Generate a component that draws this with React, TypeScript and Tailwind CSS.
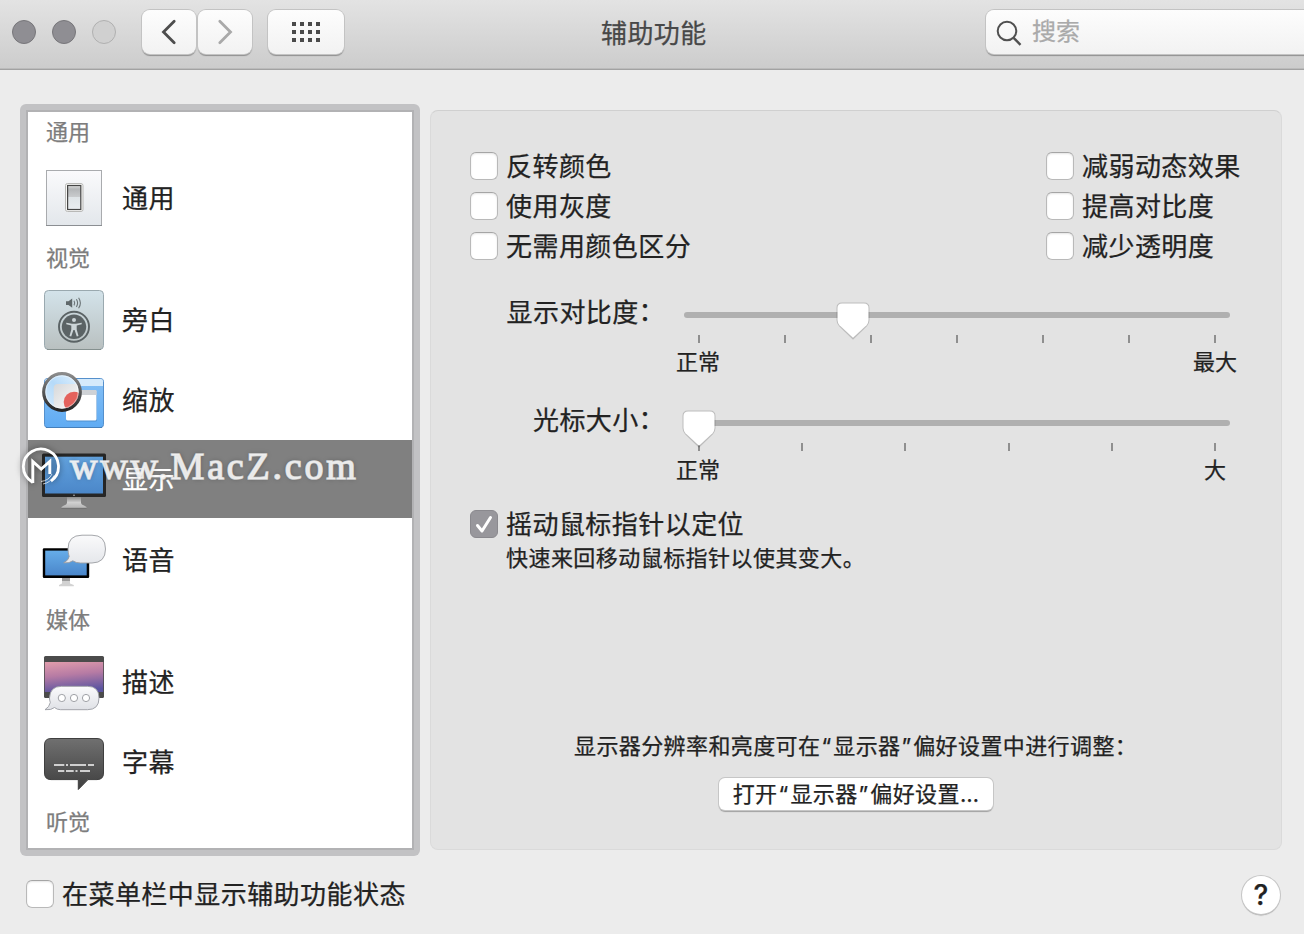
import type { ReactNode } from "react";

const toolbarButton =
  "flex h-[44px] items-center justify-center rounded-[8px] bg-linear-to-b from-[#fdfdfd] to-[#f2f2f2] shadow-[0_0_0_1px_#c3c3c3,0_1.5px_1px_#8f8f8f]";

function GeneralIcon() {
  return (
    <svg width="64" height="64" viewBox="0 0 64 64">
      <defs>
        <linearGradient id="plate" x1="0" y1="0" x2="0" y2="1">
          <stop offset="0" stopColor="#fafafc" />
          <stop offset="1" stopColor="#e3e7eb" />
        </linearGradient>
        <linearGradient id="rocker" x1="0" y1="0" x2="0" y2="1">
          <stop offset="0" stopColor="#dcdcdc" />
          <stop offset="0.15" stopColor="#b4b6b8" />
          <stop offset="0.46" stopColor="#c8cacc" />
          <stop offset="0.5" stopColor="#dfe4e7" />
          <stop offset="1" stopColor="#e9edf0" />
        </linearGradient>
      </defs>
      <rect x="4.5" y="4.5" width="55" height="55" fill="url(#plate)" stroke="#a9abae" />
      <path d="M4 59.5h56" stroke="#8b8e92" />
      <rect x="23.5" y="17.5" width="17.5" height="28" rx="2" fill="#f7f7f5" stroke="#b9b9b7" />
      <rect x="25.6" y="19.5" width="13.2" height="24" fill="url(#rocker)" stroke="#454545" strokeWidth="1.2" />
    </svg>
  );
}

function VoiceOverIcon() {
  return (
    <svg width="64" height="64" viewBox="0 0 64 64">
      <defs>
        <linearGradient id="voice" x1="0" y1="0" x2="0" y2="1">
          <stop offset="0" stopColor="#d3e3ea" />
          <stop offset="1" stopColor="#b9c0c0" />
        </linearGradient>
      </defs>
      <rect x="2.5" y="2.5" width="59" height="59" rx="4" fill="url(#voice)" stroke="#9aa9af" />
      <path d="M5 61.5h54" stroke="#85908f" />
      <path d="M24 13.3h2.5l3.7-2.8v9.2l-3.7-2.8H24z" fill="#5f686a" />
      <g fill="none" stroke="#6a7375" strokeWidth="1.1">
        <path d="M32 12.8q1.4 2.3 0 4.6M34.4 11.3q2.4 3.8 0 7.6M36.6 9.7q3.6 5.3 0 10.6" />
      </g>
      <circle cx="32" cy="38.8" r="15" fill="none" stroke="#5b6365" strokeWidth="1.9" />
      <circle cx="32" cy="38.8" r="12.2" fill="#5b6365" />
      <circle cx="32" cy="32" r="2" fill="#ccd5d8" />
      <path
        d="M24.3 34.7l5.7 1h4l5.7-1v1.6l-5 1.2v4l1.8 6.6-1.7.5-2.2-6.5h-1.2l-2.2 6.5-1.7-.5 1.8-6.6v-4l-5-1.2z"
        fill="#ccd5d8"
      />
    </svg>
  );
}

function ZoomIcon() {
  return (
    <svg width="64" height="64" viewBox="0 0 64 64">
      <defs>
        <linearGradient id="zoomBody" x1="0" y1="0" x2="0" y2="1">
          <stop offset="0" stopColor="#86c0f5" />
          <stop offset="1" stopColor="#5fabf3" />
        </linearGradient>
        <linearGradient id="lensRim" x1="0" y1="0" x2="0" y2="1">
          <stop offset="0" stopColor="#8b8b8b" />
          <stop offset="1" stopColor="#262626" />
        </linearGradient>
        <linearGradient id="lensGlass" x1="1" y1="0" x2="0" y2="1">
          <stop offset="0" stopColor="#e3f2fd" />
          <stop offset="0.5" stopColor="#b5daf9" />
          <stop offset="1" stopColor="#d8ecfc" />
        </linearGradient>
        <linearGradient id="lensWindow" x1="0" y1="0" x2="1" y2="1">
          <stop offset="0" stopColor="#d6d8da" />
          <stop offset="0.6" stopColor="#f5f5f5" />
        </linearGradient>
        <clipPath id="lensClip">
          <circle cx="20" cy="23.8" r="17" />
        </clipPath>
      </defs>
      <rect x="2.5" y="10.5" width="59" height="49" rx="3" fill="url(#zoomBody)" stroke="#5590cc" />
      <path d="M3 18V13q0-2 2-2h54q2 0 2 2v5z" fill="#d5eafb" />
      <path d="M4 59.5h56" stroke="#447fbb" />
      <rect x="24" y="22.5" width="31" height="31" rx="1.5" fill="#4c8fd0" />
      <rect x="24" y="22" width="30.5" height="30.5" rx="1.5" fill="#fff" />
      <path d="M24 27v-4q0-1 1-1h28.5q1 0 1 1v4z" fill="#cfd2d6" />
      <circle cx="20" cy="23.8" r="17.5" fill="url(#lensGlass)" />
      <g clipPath="url(#lensClip)">
        <rect x="11.7" y="16" width="34" height="34" rx="4" fill="url(#lensWindow)" />
        <circle cx="32" cy="34" r="10.3" fill="#e4625c" />
      </g>
      <circle cx="20" cy="24" r="18.3" fill="none" stroke="url(#lensRim)" strokeWidth="3.2" />
      <circle cx="20" cy="24" r="16.3" fill="none" stroke="#fff" strokeOpacity="0.6" strokeWidth="0.8" />
    </svg>
  );
}

function DisplayIcon() {
  return (
    <svg width="64" height="64" viewBox="0 0 64 64">
      <defs>
        <linearGradient id="screen" x1="0" y1="0" x2="0" y2="1">
          <stop offset="0" stopColor="#62a2de" />
          <stop offset="1" stopColor="#4b87c9" />
        </linearGradient>
        <linearGradient id="stand" x1="0" y1="0" x2="0" y2="1">
          <stop offset="0" stopColor="#8e8e8e" />
          <stop offset="0.5" stopColor="#d0d0d0" />
          <stop offset="1" stopColor="#b5b5b5" />
        </linearGradient>
      </defs>
      <path d="M25 49h14v6q0 1.5 3.5 2.8l2 1.2v1H19.5v-1l2-1.2q3.5-1.3 3.5-2.8z" fill="url(#stand)" />
      <path d="M19.5 60.3h25" stroke="#6b6b6b" strokeWidth="0.8" />
      <rect x="0" y="5.5" width="64" height="43.5" rx="1.5" fill="#262626" />
      <rect x="3" y="8.7" width="58" height="36.8" fill="url(#screen)" />
      <circle cx="32" cy="47.2" r="0.8" fill="#bbb" />
    </svg>
  );
}

function SpeechIcon() {
  return (
    <svg width="64" height="64" viewBox="0 0 64 64">
      <defs>
        <linearGradient id="speechScreen" x1="0" y1="0" x2="0" y2="1">
          <stop offset="0" stopColor="#66ade9" />
          <stop offset="1" stopColor="#4a86ca" />
        </linearGradient>
        <linearGradient id="bubble" x1="0" y1="0" x2="0" y2="1">
          <stop offset="0" stopColor="#fafafb" />
          <stop offset="1" stopColor="#e5e7eb" />
        </linearGradient>
      </defs>
      <path d="M20 50h8v5.5l3.8 1.5v1.2H17V57l3-1.5z" fill="#d2d2d2" />
      <path d="M20 50h8v3h-8z" fill="#9c9c9c" />
      <rect x="0.8" y="20.2" width="46.4" height="29.8" rx="1.2" fill="#000" />
      <rect x="3.2" y="22.6" width="41.5" height="24.8" fill="url(#speechScreen)" />
      <path
        d="M21.7 34.8Q26.5 32.5 27.2 28.5Q26 25 26 21Q26 7.2 40 7.2H50Q63.5 7.2 63.5 21T50 35H38.5Q34 35 30.8 32.8Q27.5 35.5 21.7 34.8z"
        fill="url(#bubble)"
        stroke="#9b9da2"
        strokeWidth="0.9"
      />
    </svg>
  );
}

function DescriptionIcon() {
  return (
    <svg width="64" height="64" viewBox="0 0 64 64">
      <defs>
        <linearGradient id="sky" x1="0.2" y1="0" x2="0.4" y2="1">
          <stop offset="0" stopColor="#de9aab" />
          <stop offset="0.45" stopColor="#b67ba4" />
          <stop offset="1" stopColor="#5b54a0" />
        </linearGradient>
        <linearGradient id="descBubble" x1="0" y1="0" x2="0" y2="1">
          <stop offset="0" stopColor="#fbfbfc" />
          <stop offset="1" stopColor="#dfe1e6" />
        </linearGradient>
      </defs>
      <rect x="2" y="6" width="60" height="42" rx="1.5" fill="#4b4b4b" />
      <rect x="2.8" y="12" width="58.4" height="30" fill="url(#sky)" />
      <path
        d="M3 59.7Q7.5 57 8.3 52.5Q7.5 50 7.5 48Q8 36.3 19.5 36.3H45.5Q57 36.3 57 48T45.5 59.7H18.5Q15 59.7 12.5 57.5Q9.5 60.3 3 59.7z"
        fill="url(#descBubble)"
        stroke="#9a9ca3"
        strokeWidth="0.9"
      />
      <g fill="#fff" stroke="#9fa1a6">
        <circle cx="19.8" cy="48" r="3.6" />
        <circle cx="32" cy="48" r="3.6" />
        <circle cx="44" cy="48" r="3.6" />
      </g>
    </svg>
  );
}

function CaptionIcon() {
  return (
    <svg width="64" height="64" viewBox="0 0 64 64">
      <defs>
        <linearGradient id="caption" x1="0" y1="0" x2="0" y2="1">
          <stop offset="0" stopColor="#707070" />
          <stop offset="1" stopColor="#3f3f3f" />
        </linearGradient>
      </defs>
      <path
        d="M9 8.5H55Q61.5 8.5 61.5 15V43Q61.5 49.6 55 49.6H46L36.3 59.5V49.6H9Q2.5 49.6 2.5 43V15Q2.5 8.5 9 8.5z"
        fill="url(#caption)"
        stroke="#3f3f3f"
      />
      <path d="M12 35h10.3M24 35h2M28 35h16M46 35h6M16 41h6.3M24 41h7.7M33.5 41h2M38 41h10" stroke="#cfcfcf" strokeWidth="1.9" />
    </svg>
  );
}

function SidebarHeader({ children, first = false }: { children: ReactNode; first?: boolean }) {
  return (
    <div
      className={`flex items-center pl-[18px] text-[22px] leading-[30px] text-[#7d7d7d] ${
        first ? "h-[46px] pb-[6px]" : "h-[42px] pb-[2px]"
      }`}
    >
      {children}
    </div>
  );
}

function SidebarItem({ icon, label, selected = false }: { icon: ReactNode; label: string; selected?: boolean }) {
  return (
    <div
      className={`flex h-[80px] items-center gap-4 border-b-2 border-white pt-[2px] pl-[14px] text-[26px] leading-[36px] tracking-[0.4px] ${
        selected ? "bg-[#808080] text-white" : "text-[#222]"
      }`}
    >
      {icon}
      <span className={selected ? "" : "pt-px"}>{label}</span>
    </div>
  );
}

function Checkbox({ label, checked = false }: { label: string; checked?: boolean }) {
  return (
    <label className="flex h-[28px] items-center gap-2 text-[26px] leading-[28px] tracking-[0.45px] whitespace-nowrap text-[#222]">
      {checked ? (
        <span className="size-[28px] shrink-0 rounded-[6px] border border-[#8a898e] bg-[#98979c]">
          <svg width="26" height="26" viewBox="0 0 26 26" fill="none">
            <path d="M6.5 14.5l4.5 5.5L19.5 6.5" stroke="#fff" strokeWidth="3" strokeLinecap="round" strokeLinejoin="round" />
          </svg>
        </span>
      ) : (
        <span className="size-[28px] shrink-0 rounded-[6px] border border-[#b9b9b9] border-t-[#a5a5a5] bg-white shadow-[inset_0_1px_2px_#e4e4e4]" />
      )}
      <span className="pt-[2px]">{label}</span>
    </label>
  );
}

interface SliderProps {
  label: string;
  ticks: number;
  value: number;
  min: string;
  max: string;
}

function Slider({ label, ticks, value, min, max }: SliderProps) {
  return (
    <div className="flex h-[108px] text-[#222]">
      <div className="flex w-[194px] justify-end pt-[8px] text-[26px] leading-[36px] tracking-[0.4px]">
        <span>{label}</span>
        <span className="-mt-[1px]">：</span>
      </div>
      <div className="ml-[12px] w-[560px]">
        <div className="relative ml-[7px] h-[27px] w-[546px] pt-[25px]">
          <div className="h-[6px] rounded-full bg-[#b0b0b0]" />
          <svg
            className="absolute top-[14px] z-10 -ml-[18px]"
            style={{ left: value }}
            width="36"
            height="40"
            viewBox="0 0 36 40"
          >
            <path
              d="M7 2.5H29Q33.5 2.5 33.5 7V19Q33.5 22 31.5 24.2L18 37.3L4.5 24.2Q2.5 22 2.5 19V7Q2.5 2.5 7 2.5z"
              fill="none"
              stroke="#000"
              strokeOpacity="0.17"
              strokeWidth="2"
            />
            <path
              d="M7 2.5H29Q33.5 2.5 33.5 7V19Q33.5 22 31.5 24.2L18 36.8L4.5 24.2Q2.5 22 2.5 19V7Q2.5 2.5 7 2.5z"
              fill="#fff"
            />
          </svg>
        </div>
        <div className="mx-[21px] mt-[21px] flex justify-between">
          {Array.from({ length: ticks }, (_, i) => (
            <span key={i} className="h-[8px] w-[2px] bg-[#8f8f8f]" />
          ))}
        </div>
        <div className="mt-[4px] flex justify-between text-[22px] leading-[30px]">
          <span className="-ml-[1px] w-[44px] text-center whitespace-nowrap">{min}</span>
          <span className="w-[44px] text-center whitespace-nowrap">{max}</span>
        </div>
      </div>
    </div>
  );
}

function Quoted({ children }: { children: string }) {
  return (
    <>
      <span className="pl-[1px] tracking-[2.2px]">“</span>
      {children}
      <span className="pl-[1px] tracking-[2px]">”</span>
    </>
  );
}

function Watermark() {
  return (
    <div className="absolute top-[445px] left-[20px] z-20 flex items-start">
      <svg className="drop-shadow-[0_0_3px_rgba(0,0,0,0.5)]" width="42" height="44" viewBox="0 0 42 44" fill="none" stroke="#fff">
        <path d="M12.8 37.5Q3.3 31.5 3.3 21.5A17.6 17.6 0 1 1 31 36" strokeWidth="2.8" />
        <path d="M12.8 38V16.5l8.4 7.5 8.6-7.5V29" strokeWidth="2.9" />
        <path d="M21 36.5q8-1 11-7.5M23 39q8-1.5 11-8.5" strokeWidth="0.9" strokeOpacity="0.8" />
      </svg>
      <span className="-mt-[1px] ml-[8px] font-['Liberation_Serif'] text-[38px] leading-[44px] tracking-[2.8px] text-white/85 [-webkit-text-stroke:1.5px_rgba(240,240,240,0.8)] [text-shadow:0_0_5px_rgba(0,0,0,0.35)]">
        www.MacZ.com
      </span>
    </div>
  );
}

export default function App() {
  return (
    <div className="relative flex h-[934px] w-[1304px] flex-col overflow-hidden bg-[#ececec] font-[Inter,'Noto_Sans_CJK_SC',sans-serif] [-webkit-text-stroke:0.25px]">
      <header className="grid h-[70px] shrink-0 grid-cols-[601px_385px_318px] border-b border-[#a2a2a2] bg-linear-to-b from-[#e3e3e3] to-[#cccccc] pt-[10px] shadow-[inset_0_-1px_0_#bbb]">
        <div className="flex">
          <div className="flex h-[44px] items-center gap-4 pl-[12px]">
            <span className="size-[24px] rounded-full border border-[#77767a] bg-[#8f8e93]" />
            <span className="size-[24px] rounded-full border border-[#77767a] bg-[#8f8e93]" />
            <span className="size-[24px] rounded-full border border-[#b0b0b0] bg-[#d0d0d0]" />
          </div>
          <button className={`ml-[26px] w-[54px] ${toolbarButton}`}>
            <svg width="54" height="44" viewBox="0 0 54 44" fill="none">
              <path d="M32.2 11.2L21.5 22l10.7 10.8" stroke="#4d4d4d" strokeWidth="2.8" strokeLinecap="round" />
            </svg>
          </button>
          <button className={`ml-[2px] w-[54px] ${toolbarButton}`}>
            <svg width="54" height="44" viewBox="0 0 54 44" fill="none">
              <path d="M21.8 11.2L32.5 22 21.8 32.8" stroke="#a9a9a9" strokeWidth="2.8" strokeLinecap="round" />
            </svg>
          </button>
          <button className={`ml-[16px] w-[76px] ${toolbarButton}`}>
            <span className="grid grid-cols-4 gap-[4px]">
              {Array.from({ length: 12 }, (_, i) => (
                <span key={i} className="size-[4px] bg-[#4a4a4a]" />
              ))}
            </span>
          </button>
        </div>
        <h1 className="pt-[2px] text-[26px] leading-[44px] tracking-[0.4px] text-[#484848]">辅助功能</h1>
        <div className="flex h-[44px] w-[330px] items-center gap-[10px] rounded-[8px] bg-linear-to-b from-[#fdfdfd] to-[#f2f2f2] pl-[10px] text-[24px] text-[#aaa] shadow-[0_0_0_1px_#c3c3c3,0_1.5px_1px_#8f8f8f]">
          <svg className="mt-[2px]" width="26" height="26" viewBox="0 0 26 26" fill="none" stroke="#505050" strokeWidth="2">
            <circle cx="11" cy="11" r="9.3" />
            <path d="M17.6 17.8l6.9 7" strokeWidth="2.4" />
          </svg>
          <span className="leading-[44px]">搜索</span>
        </div>
      </header>

      <main className="flex">
        <aside className="mt-[34px] ml-[20px] h-[752px] w-[400px] shrink-0 rounded-[6px] bg-[#c2c2c4] p-[6px]">
          <div className="h-[740px] border-2 border-[#b2b2b4] bg-white">
            <SidebarHeader first>通用</SidebarHeader>
            <SidebarItem icon={<GeneralIcon />} label="通用" />
            <SidebarHeader>视觉</SidebarHeader>
            <SidebarItem icon={<VoiceOverIcon />} label="旁白" />
            <SidebarItem icon={<ZoomIcon />} label="缩放" />
            <SidebarItem icon={<DisplayIcon />} label="显示" selected />
            <SidebarItem icon={<SpeechIcon />} label="语音" />
            <SidebarHeader>媒体</SidebarHeader>
            <SidebarItem icon={<DescriptionIcon />} label="描述" />
            <SidebarItem icon={<CaptionIcon />} label="字幕" />
            <SidebarHeader>听觉</SidebarHeader>
          </div>
        </aside>

        <section className="mt-[40px] ml-[10px] h-[740px] w-[852px] rounded-[8px] border border-[#dadada] border-t-[#d0d0d0] bg-[#e3e3e3]">
          <div className="mt-[41px] ml-[39px] flex">
            <div className="flex w-[576px] flex-col gap-3">
              <Checkbox label="反转颜色" />
              <Checkbox label="使用灰度" />
              <Checkbox label="无需用颜色区分" />
            </div>
            <div className="flex flex-col gap-3">
              <Checkbox label="减弱动态效果" />
              <Checkbox label="提高对比度" />
              <Checkbox label="减少透明度" />
            </div>
          </div>

          <div className="mt-[27px] ml-[40px]">
            <Slider label="显示对比度" ticks={7} value={169} min="正常" max="最大" />
            <Slider label="光标大小" ticks={6} value={15} min="正常" max="大" />
          </div>

          <div className="mt-[7px] ml-[39px]">
            <Checkbox label="摇动鼠标指针以定位" checked />
            <p className="mt-[5px] pl-[36px] text-[22px] leading-[30px] tracking-[0.45px] text-[#222]">
              快速来回移动鼠标指针以使其变大。
            </p>
          </div>

          <p className="mt-[158px] pl-[143px] text-[22px] leading-[30px] tracking-[0.4px] whitespace-nowrap text-[#222]">
            显示器分辨率和亮度可在<Quoted>显示器</Quoted>偏好设置中进行调整：
          </p>
          <button className="mt-[17px] ml-[288px] h-[32px] w-[274px] rounded-[6px] bg-white text-[22px] leading-[32px] tracking-[0.4px] whitespace-nowrap text-[#222] shadow-[0_0_0_1px_#c6c6c6,0_1.5px_1px_#a0a0a0]">
            打开<Quoted>显示器</Quoted>偏好设置…
          </button>
        </section>
      </main>

      <footer className="flex items-start justify-between pt-[20px] pr-[24px] pl-[26px]">
        <div className="pt-[4px]">
          <Checkbox label="在菜单栏中显示辅助功能状态" />
        </div>
        <button className="size-[38px] rounded-full bg-white text-[28px] leading-[38px] font-medium text-[#222] shadow-[0_0_0_1px_#c6c6c6,0_1.5px_1px_#a0a0a0]">
          ?
        </button>
      </footer>

      <Watermark />
    </div>
  );
}
